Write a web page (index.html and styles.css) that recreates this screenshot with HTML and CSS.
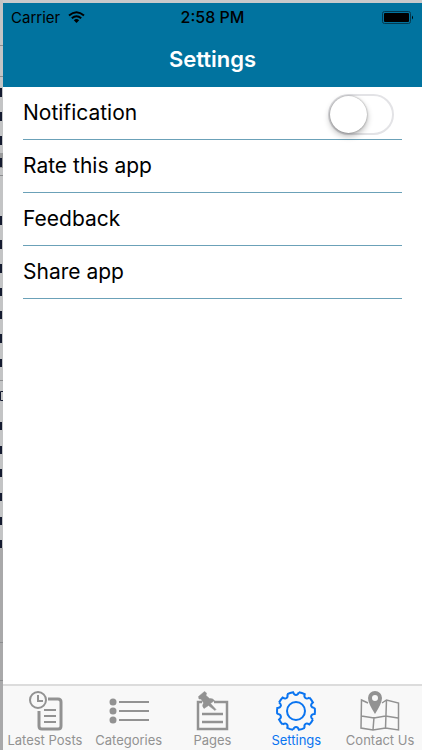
FILE: index.html
```
<!DOCTYPE html>
<html lang="en">
  <head>
    <meta charset="UTF-8" />
    <meta name="viewport" content="width=device-width, initial-scale=1.0" />
    <title>Settings</title>
    <link rel="stylesheet" href="styles.css">
  </head>
  <body>
    <!-- edge of the window behind the app -->
    <svg class="backdrop" width="3" height="750" aria-hidden="true">
      <rect width="3" height="750" fill="#c3c4c5" />
      <rect y="548" width="3" height="202" fill="#a9a9aa" />
      <path d="M0 45.500h3M0 76.500h3M0 175.500h3M0 380.500h3M0 642.500h3M0 680.500h3" stroke="#8c8d8f" />
      <rect y="153" width="3" height="15" fill="#999a9b" />
      <path d="M1 88v9M1 112v9M1 136v9M1 158v9M1 216v9M1 240v9M1 264v9M1 288v8M1 311v8M1 334v9M1 359v8M1 422v8M1 446v8M1 469v8M1 493v8M1 517v8M1 540v8" stroke="#151b30" stroke-width="2" />
      <path d="M3 391.500H0.500V400.500H3" fill="none" stroke="#151b30" />
    </svg>
    <div class="app">
      <header class="header">
        <div class="status-bar">
          <div class="carrier">
            Carrier
            <svg width="17" height="12" viewBox="0 0 17 12" fill="none" stroke="currentColor" stroke-width="2">
              <path d="M1 4.500Q8.500 -2 16 4.500M3.800 7.300Q8.500 3.300 13.200 7.300" />
              <path d="M8.500 12L5.800 9.200Q8.500 7 11.200 9.200Z" fill="currentColor" stroke="none" />
            </svg>
          </div>
          <div class="time">2:58 PM</div>
          <svg class="battery" width="32" height="13" viewBox="0 0 32 13">
            <rect x="0.500" y="0.500" width="28" height="12" rx="2" fill="none" stroke="#04394e" />
            <rect x="2" y="2" width="25" height="9" rx="1" />
            <path d="M30 4.500q2 2 0 4z" />
          </svg>
        </div>
        <h1 class="title">Settings</h1>
      </header>
      <main class="settings">
        <label class="row" for="notification">
          Notification
          <input class="switch" type="checkbox" role="switch" id="notification" />
        </label>
        <button class="row" type="button">Rate this app</button>
        <button class="row" type="button">Feedback</button>
        <button class="row" type="button">Share app</button>
      </main>
      <nav class="tab-bar">
        <a class="tab" href="#latest">
          <svg class="icon" viewBox="0 0 40 40">
            <path d="M23 8H33Q36 8 36 11V35Q36 38 33 38H17Q14 38 14 35V20" stroke-width="3" />
            <circle cx="13" cy="9" r="8" />
            <path d="M13 4V10H18M19 19H31M19 25H31M19 31H31" />
          </svg>
          Latest Posts
        </a>
        <a class="tab" href="#categories">
          <svg class="icon" viewBox="0 0 40 40">
            <path d="M10 11H40M10 20H40M10 29H40" />
            <path d="M4 11h.01M4 20h.01M4 29h.01" stroke-width="7" stroke-linecap="round" />
          </svg>
          Categories
        </a>
        <a class="tab" href="#pages">
          <svg class="icon" viewBox="0 0 40 40">
            <path d="M10 11H6V38H35V11H22M10 23H31M10 31H31" stroke-width="2.500" />
            <path d="M6.500 5.500L12.500 .5 14.500 2 14 4.500 17.500 7.500Q20.500 7 22.500 9.500L18.500 12.500 24 18.500 23 19.500 16.500 14.500 12 17.500Q9.500 15 11.500 12L9 8H7Z" fill="currentColor" stroke-width="0.500" />
          </svg>
          Pages
        </a>
        <a class="tab active" href="#settings">
          <svg class="icon" viewBox="-20 -20 40 40">
            <defs>
              <path id="tooth" d="M18.700 -3.100Q19.200 0 18.700 3.100C14.900 3 13.800 6.300 17 8.500" />
            </defs>
            <use href="#tooth" />
            <use href="#tooth" transform="rotate(36)" />
            <use href="#tooth" transform="rotate(72)" />
            <use href="#tooth" transform="rotate(108)" />
            <use href="#tooth" transform="rotate(144)" />
            <use href="#tooth" transform="rotate(180)" />
            <use href="#tooth" transform="rotate(216)" />
            <use href="#tooth" transform="rotate(252)" />
            <use href="#tooth" transform="rotate(288)" />
            <use href="#tooth" transform="rotate(324)" />
            <circle r="9" />
          </svg>
          Settings
        </a>
        <a class="tab" href="#contact">
          <svg class="icon" viewBox="0 0 40 40">
            <path d="M8 12L1.500 9 1 37 13 39 25.500 37 38.500 39V12L26.500 9 22 12M26.500 9L25.500 37M14 26L13 39M1.500 25L14 27 25.500 25 38 27" stroke-width="1.500" />
            <path d="M15 23Q8 12 8 7A7 7 0 0 1 22 7Q22 12 15 23ZM15 4A3 3 0 0 0 15 10A3 3 0 0 0 15 4Z" fill="currentColor" fill-rule="evenodd" stroke="none" />
          </svg>
          Contact Us
        </a>
      </nav>
    </div>
  </body>
</html>
```
FILE: styles.css
```
* {
  box-sizing: border-box;
  margin: 0;
  padding: 0;
}

body {
  min-height: 100vh;
  padding: 3px 0 0 3px;
  display: flex;
  background-color: #c9cacb;
  font-family: Inter, "Liberation Sans", sans-serif;
  color: #000;
}

.backdrop {
  position: absolute;
  left: 0;
  top: 0;
}

.app {
  flex: 1;
  display: flex;
  flex-direction: column;
  background-color: #fff;
}

.header {
  background-color: #01739f;
  padding-bottom: 6px;
}

.status-bar {
  display: grid;
  grid-template-columns: 1fr auto 1fr;
  align-items: center;
  height: 28px;
  padding: 0 8px;
  font-size: 15px;
}

.carrier {
  display: flex;
  align-items: center;
  gap: 8px;
}

.time {
  font-size: 16px;
  font-weight: 500;
}

.battery {
  justify-self: end;
}

.title {
  margin-top: 6px;
  color: #fff;
  font-size: 22px;
  font-weight: 600;
  line-height: 44px;
  text-align: center;
}

.settings {
  flex: 1;
  padding: 0 20px;
}

.row {
  display: flex;
  align-items: center;
  justify-content: space-between;
  width: 100%;
  height: 53px;
  padding: 0 8px 2px 0;
  border: none;
  border-bottom: 1px solid #6ba1b8;
  background: none;
  font-family: inherit;
  font-size: 21px;
  color: inherit;
  cursor: pointer;
}

.switch {
  appearance: none;
  width: 66px;
  height: 41px;
  margin-top: 4px;
  border: 2px solid #e3e3e6;
  border-radius: 21px;
  cursor: pointer;
}

.switch::before {
  content: "";
  display: block;
  width: 37px;
  height: 37px;
  border-radius: 50%;
  background-color: #fff;
  box-shadow: 0 3px 6px rgba(0, 0, 0, 0.3), 0 0 2px rgba(0, 0, 0, 0.4);
}

.switch:checked {
  background-color: #4cd964;
}

.switch:checked::before {
  margin-left: auto;
}

.tab-bar {
  display: flex;
  height: 66px;
  padding-top: 5px;
  border-top: 2px solid #dcdcdc;
  background-color: #f8f8f8;
}

.tab {
  flex: 1;
  display: flex;
  flex-direction: column;
  align-items: center;
  color: #929292;
  font-size: 13px;
  line-height: 19px;
  text-decoration: none;
  white-space: nowrap;
}

.icon {
  width: 40px;
  height: 40px;
  fill: none;
  stroke: currentColor;
  stroke-width: 2;
}

.active {
  color: #0a74f0;
}
```
